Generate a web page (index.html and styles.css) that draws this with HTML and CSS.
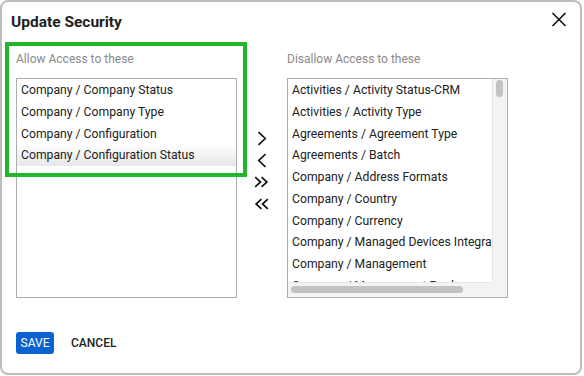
FILE: index.html
```html
<!DOCTYPE html>
<html>
<head>
<meta charset="utf-8">
<link rel="stylesheet" href="styles.css">
</head>
<body>
<div class="dialog">
  <div class="header">
    <h1 class="title">Update Security</h1>
    <button class="close" aria-label="Close">
      <svg width="16" height="15" viewBox="0 0 16 15"><path d="M1.5 1 L14.5 14 M14.5 1 L1.5 14" stroke="#111" stroke-width="1.6" fill="none"/></svg>
    </button>
  </div>
  <div class="body">
    <div class="col">
      <div class="label">Allow Access to these</div>
      <div class="list">
        <div class="items">
          <div class="item">Company / Company Status</div>
          <div class="item">Company / Company Type</div>
          <div class="item">Company / Configuration</div>
          <div class="item hover">Company / Configuration Status</div>
        </div>
      </div>
    </div>
    <div class="arrows">
      <div class="arrow"><svg width="10" height="15" viewBox="0 0 10 15"><polyline points="1.5,1.2 8.3,7.5 1.5,13.8" fill="none" stroke="#111" stroke-width="1.6"/></svg></div>
      <div class="arrow"><svg width="10" height="15" viewBox="0 0 10 15"><polyline points="8.5,1.2 1.7,7.5 8.5,13.8" fill="none" stroke="#111" stroke-width="1.6"/></svg></div>
      <div class="arrow"><svg width="15" height="12" viewBox="0 0 15 12"><polyline points="1.2,1.2 6.5,6 1.2,10.8" fill="none" stroke="#111" stroke-width="1.7"/><polyline points="7.6,1.2 12.9,6 7.6,10.8" fill="none" stroke="#111" stroke-width="1.7"/></svg></div>
      <div class="arrow"><svg width="15" height="12" viewBox="0 0 15 12"><polyline points="7.4,1.2 2.1,6 7.4,10.8" fill="none" stroke="#111" stroke-width="1.7"/><polyline points="13.8,1.2 8.5,6 13.8,10.8" fill="none" stroke="#111" stroke-width="1.7"/></svg></div>
    </div>
    <div class="col">
      <div class="label">Disallow Access to these</div>
      <div class="list scroll">
        <div class="items">
          <div class="item">Activities / Activity Status-CRM</div>
          <div class="item">Activities / Activity Type</div>
          <div class="item">Agreements / Agreement Type</div>
          <div class="item">Agreements / Batch</div>
          <div class="item">Company / Address Formats</div>
          <div class="item">Company / Country</div>
          <div class="item">Company / Currency</div>
          <div class="item">Company / Managed Devices Integration</div>
          <div class="item">Company / Management</div>
          <div class="item">Company / Management Pools</div>
        </div>
        <div class="vbar"><div class="vthumb"></div></div>
        <div class="hbar"><div class="hthumb"></div></div>
        <div class="corner"></div>
      </div>
    </div>
  </div>
  <div class="footer">
    <button class="btn save">SAVE</button>
    <button class="btn cancel">CANCEL</button>
  </div>
  <div class="highlight"></div>
</div>
</body>
</html>
```
FILE: styles.css
```css
html, body {
  margin: 0;
  padding: 0;
  background: #fff;
}
body {
  font-family: Roboto, "Liberation Sans", sans-serif;
  color: #222;
}
.dialog {
  position: relative;
  width: 582px;
  height: 375px;
  box-sizing: border-box;
  border: 2px solid #bdbdbd;
  border-radius: 8px;
  display: flex;
  flex-direction: column;
  background: #fff;
}
.header {
  display: flex;
  justify-content: space-between;
  align-items: flex-start;
  padding: 10px 13px 0 9px;
  height: 20px;
}
.title {
  margin: 0;
  font-size: 15.5px;
  line-height: 20px;
  font-weight: 700;
  color: #1e1e1e;
}
.close {
  border: 0;
  background: none;
  padding: 0;
  margin-top: 0;
  width: 16px;
  height: 15px;
  display: flex;
}
.body {
  display: flex;
  padding: 20px 0 0 14px;
}
.col {
  width: 221px;
  display: flex;
  flex-direction: column;
}
.label {
  font-size: 12px;
  line-height: 14px;
  color: #8a8a8a;
  margin-bottom: 12px;
}
.list {
  height: 220px;
  box-sizing: border-box;
  border: 1px solid #adadad;
  overflow: hidden;
}
.items {
  overflow: hidden;
  min-width: 0;
}
.item {
  height: 21.75px;
  line-height: 22.5px;
  padding-left: 4px;
  font-size: 12.2px;
  color: #222;
  white-space: nowrap;
}
.item.hover {
  background: linear-gradient(#ffffff, #e7e7e7);
}
.list.scroll {
  display: grid;
  grid-template-columns: 1fr 15px;
  grid-template-rows: 1fr 15px;
}
.vbar {
  background: #f3f3f3;
  border-left: 1px solid #e6e6e6;
  padding: 1px 0 0 3px;
}
.vthumb {
  width: 7px;
  height: 17px;
  border-radius: 4px;
  background: #c2c2c2;
}
.hbar {
  background: #f3f3f3;
  border-top: 1px solid #e6e6e6;
  padding: 3px 0 0 3px;
}
.hthumb {
  width: 172px;
  height: 7px;
  border-radius: 4px;
  background: #c2c2c2;
}
.corner {
  background: #f3f3f3;
}
.arrows {
  width: 50px;
  padding-top: 76px;
  display: flex;
  flex-direction: column;
  align-items: center;
  box-sizing: border-box;
  padding-right: 1px;
}
.arrow {
  height: 21.7px;
  display: flex;
  align-items: center;
  justify-content: center;
}
.footer {
  display: flex;
  align-items: center;
  padding: 34px 0 0 14px;
  gap: 9px;
}
.btn {
  font-family: Roboto, "Liberation Sans", sans-serif;
  font-size: 12px;
  border: 0;
  height: 22px;
  line-height: 22px;
  padding: 0 4px;
  border-radius: 3px;
  cursor: pointer;
}
.save {
  background: #0a63cf;
  color: #fff;
  font-weight: 400;
  width: 38px;
  padding: 0;
}
.cancel {
  background: none;
  color: #222;
  font-weight: 500;
  padding: 0 8px;
}
.highlight {
  position: absolute;
  left: 3px;
  top: 40px;
  width: 242px;
  height: 135px;
  box-sizing: border-box;
  border: 4px solid #21b72b;
  pointer-events: none;
}
```
